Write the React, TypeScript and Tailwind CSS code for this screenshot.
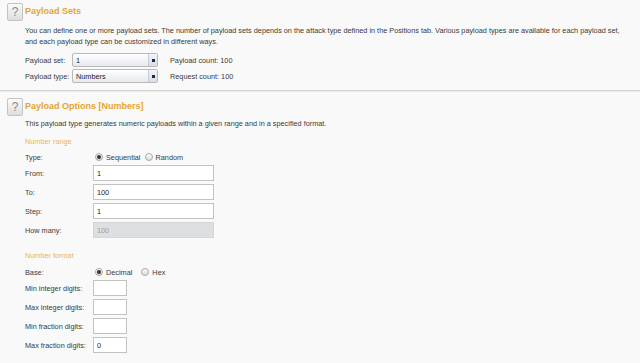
import React from 'react';

const font = { fontFamily: '"Liberation Sans", Arial, sans-serif' };

function HelpIcon() {
  return (
    <div className="flex h-[18px] w-[16px] shrink-0 items-center justify-center rounded-[2px] border border-[#c4c4c4] bg-gradient-to-b from-[#fbfbfb] to-[#dedede] text-[12px] leading-none text-[#8a8a8a]">
      ?
    </div>
  );
}

function Select({ value }: { value: string }) {
  return (
    <div className="flex h-[14px] w-[86px] items-center justify-between rounded-[2px] border border-[#b9b9b9] bg-gradient-to-b from-[#ffffff] to-[#e6e9ef] pl-[3px]">
      <span className="text-[#222]">{value}</span>
      <div className="flex h-full w-[9px] items-center justify-center border-l border-[#c8ccd4] bg-gradient-to-b from-[#f2f4f8] to-[#d7dce6]">
        <div className="h-[3px] w-[3px] bg-[#1d2b4a]" />
      </div>
    </div>
  );
}

function Radio({ checked, label }: { checked?: boolean; label: string }) {
  return (
    <div className="flex items-center gap-[3px]">
      <div className="flex h-[8px] w-[8px] items-center justify-center rounded-full border border-[#a8a8a8] bg-gradient-to-b from-[#fdfdfd] to-[#dcdcdc]">
        {checked && <div className="h-[4px] w-[4px] rounded-full bg-[#333]" />}
      </div>
      <span>{label}</span>
    </div>
  );
}

function Field({ label, value, wide = true, disabled = false }: { label: string; value?: string; wide?: boolean; disabled?: boolean }) {
  return (
    <div className="flex h-[16px] items-center">
      <div className="w-[68px] shrink-0">{label}</div>
      <div
        className={
          (wide ? 'w-[121px] ' : 'w-[34px] ') +
          (disabled
            ? 'border-[#d6d6d6] bg-[#dedfe1] text-[#a0a0a0] '
            : 'border-[#c2c2c2] bg-white text-[#222] ') +
          'flex h-[16px] items-center border pl-[3px]'
        }
      >
        {value}
      </div>
    </div>
  );
}

export default function App() {
  return (
    <div className="h-[363px] w-[640px] overflow-hidden bg-[#f9f9f9] text-[7.3px] leading-[11px] text-[#3a3a3a]" style={font}>
      {/* Payload Sets */}
      <div className="flex gap-[2px] pl-[7px] pt-[3px]">
        <HelpIcon />
        <div className="flex flex-col">
          <h2 className="pt-[2px] text-[9px] font-bold leading-[12px] text-[#e3a432]">Payload Sets</h2>
          <p className="mt-[8px] w-[605px]">
            You can define one or more payload sets. The number of payload sets depends on the attack type defined in the Positions tab. Various payload types are available for each payload set, and each payload type can be customized in different ways.
          </p>
          <div className="mt-[6px] flex flex-col gap-[2px]">
            <div className="flex items-center">
              <div className="w-[47px]">Payload set:</div>
              <Select value="1" />
              <div className="ml-[12px]">Payload count: 100</div>
            </div>
            <div className="flex items-center">
              <div className="w-[47px]">Payload type:</div>
              <Select value="Numbers" />
              <div className="ml-[12px]">Request count: 100</div>
            </div>
          </div>
        </div>
      </div>

      <div className="mt-[7px] h-[2px] border-t border-[#d4d4d4] bg-[#ececec]" />

      {/* Payload Options */}
      <div className="flex gap-[2px] pl-[7px] pt-[6px]">
        <HelpIcon />
        <div className="flex flex-col">
          <h2 className="pt-[2px] text-[9px] font-bold leading-[12px] text-[#e3a432]">Payload Options [Numbers]</h2>
          <p className="mt-[6px]">This payload type generates numeric payloads within a given range and in a specified format.</p>

          <div className="mt-[7px] text-[#e8b660]">Number range</div>
          <div className="mt-[4px] flex h-[12px] items-center">
            <div className="w-[70px]">Type:</div>
            <div className="flex items-center gap-[4px]">
              <Radio checked label="Sequential" />
              <Radio label="Random" />
            </div>
          </div>
          <div className="mt-[2px] flex flex-col gap-[3px]">
            <Field label="From:" value="1" />
            <Field label="To:" value="100" />
            <Field label="Step:" value="1" />
            <Field label="How many:" value="100" disabled />
          </div>

          <div className="mt-[12px] text-[#e8b660]">Number format</div>
          <div className="mt-[5px] flex h-[12px] items-center">
            <div className="w-[70px]">Base:</div>
            <div className="flex items-center gap-[9px]">
              <Radio checked label="Decimal" />
              <Radio label="Hex" />
            </div>
          </div>
          <div className="mt-[2px] flex flex-col gap-[3px]">
            <Field label="Min integer digits:" wide={false} />
            <Field label="Max integer digits:" wide={false} />
            <Field label="Min fraction digits:" wide={false} />
            <Field label="Max fraction digits:" value="0" wide={false} />
          </div>
        </div>
      </div>
    </div>
  );
}
